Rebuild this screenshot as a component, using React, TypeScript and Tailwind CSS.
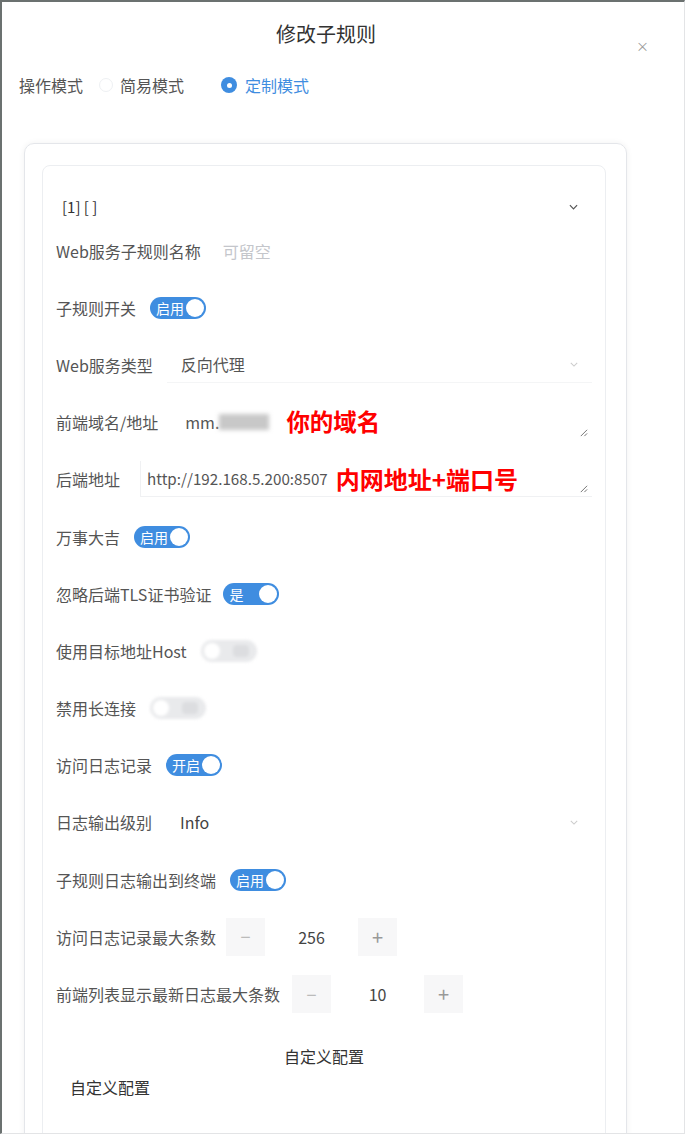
import React from "react";

const Toggle = ({ on, text }: { on: boolean; text?: string }) =>
  on ? (
    <div className="relative flex h-[22px] w-[56px] items-center rounded-full bg-[#3f8de0] pl-[6px]">
      <span className="text-[14px] leading-none text-white">{text}</span>
      <span className="absolute right-[2px] top-[2px] h-[18px] w-[18px] rounded-full bg-white" />
    </div>
  ) : (
    <div className="relative h-[22px] w-[56px] rounded-full bg-[#e9eaec] blur-[1.5px]">
      <span className="absolute left-[3px] top-[3px] h-[16px] w-[16px] rounded-full bg-white" />
      <span className="absolute right-[8px] top-[5px] h-[12px] w-[16px] rounded bg-[#dcdde0]" />
    </div>
  );

const Chevron = ({ className }: { className: string }) => (
  <svg viewBox="0 0 10 6" className={className} fill="none" stroke="currentColor" strokeWidth="1.3">
    <path d="M1 1l4 4 4-4" />
  </svg>
);

const Resize = () => (
  <svg viewBox="0 0 10 10" className="absolute bottom-[3px] right-[4px] h-[9px] w-[9px] text-[#666]" fill="none" stroke="currentColor" strokeWidth="1">
    <path d="M9 2L2 9M9 6L6 9" />
  </svg>
);

const Row = ({ label, children }: { label: string; children?: React.ReactNode }) => (
  <div className="flex h-[57.2px] items-center">
    <span className="whitespace-nowrap text-[16px] text-[#555]">{label}</span>
    {children}
  </div>
);

const Stepper = ({ value, gap }: { value: string; gap: string }) => (
  <div className={`flex items-center ${gap}`}>
    <div className="flex h-[38px] w-[39px] items-center justify-center bg-[#f7f7f8] text-[18px] text-[#bbb]">−</div>
    <div className="w-[93px] text-center text-[16px] text-[#444]">{value}</div>
    <div className="flex h-[38px] w-[39px] items-center justify-center bg-[#f7f7f8] text-[20px] text-[#999]">+</div>
  </div>
);

export default function App() {
  return (
    <div
      className="relative h-[1134px] w-[685px] overflow-hidden border-l-2 border-t-2 border-r border-b border-l-[#6b7170] border-t-[#6b7170] border-r-[#e3e4e6] border-b-[#e3e4e6] bg-white"
      style={{ fontFamily: '"Noto Sans CJK SC", "Noto Sans", sans-serif' }}
    >
      {/* header */}
      <div className="flex h-[64px] items-center justify-center pr-[34px] text-[20px] text-[#333]">修改子规则</div>
      <span className="absolute left-[634px] top-[37px] text-[13px] leading-none text-[#999]">×</span>

      {/* mode */}
      <div className="flex h-[38px] items-center pl-[17px] text-[16px] text-[#555]">
        <span>操作模式</span>
        <span className="ml-[16px] h-[14px] w-[14px] rounded-full border border-[#eef0f3]" />
        <span className="ml-[7px]">简易模式</span>
        <span className="ml-[37px] flex h-[16px] w-[16px] items-center justify-center rounded-full bg-[#3f8de0]">
          <span className="h-[5px] w-[5px] rounded-full bg-white" />
        </span>
        <span className="ml-[8px] text-[#3f8de0]">定制模式</span>
      </div>

      {/* outer card */}
      <div className="ml-[22px] mt-[39px] h-[1100px] w-[603px] rounded-[10px] border border-[#e4e6ea] pl-[17px] pt-[21px] shadow-[0_0_6px_rgba(0,0,0,0.06)]">
        <div className="h-[1100px] w-[564px] rounded-[8px] border border-[#eceef1] px-[13px] pt-[26px]">
          <div className="flex h-[30px] items-center justify-between pl-[6px] pr-[14px] text-[15px] text-[#333]">
            <span>[1] [ ]</span>
            <Chevron className="h-[6px] w-[9px] text-[#555]" />
          </div>

          <Row label="Web服务子规则名称">
            <span className="ml-[22px] text-[16px] text-[#c4c6cb]">可留空</span>
          </Row>
          <Row label="子规则开关">
            <div className="ml-[14px]"><Toggle on text="启用" /></div>
          </Row>
          <Row label="Web服务类型">
            <div className="ml-[14px] flex h-[36px] flex-1 items-center justify-between border-b border-[#f4f5f6] pl-[14px] pr-[14px]">
              <span className="text-[16px] text-[#555]">反向代理</span>
              <Chevron className="h-[5px] w-[8px] text-[#ccc]" />
            </div>
          </Row>
          <Row label="前端域名/地址">
            <div className="relative ml-[14px] flex h-[36px] flex-1 items-center pl-[13px]">
              <span className="text-[16px] text-[#555]">mm.</span>
              <span className="h-[16px] w-[50px] bg-[#c8c8c8] blur-[2px]" />
              <span className="ml-[17px] text-[23.5px] font-bold leading-none text-[#ff0000]">你的域名</span>
              <Resize />
            </div>
          </Row>
          <Row label="后端地址">
            <div className="relative ml-[20px] flex h-[36px] flex-1 items-center border-b border-l border-[#f0f1f3] pl-[6px]">
              <span className="text-[15.2px] text-[#555]">http://192.168.5.200:8507</span>
              <span className="ml-[8px] text-[24px] font-bold leading-none text-[#ff0000]">内网地址+端口号</span>
              <Resize />
            </div>
          </Row>
          <Row label="万事大吉">
            <div className="ml-[14px]"><Toggle on text="启用" /></div>
          </Row>
          <Row label="忽略后端TLS证书验证">
            <div className="ml-[12px]"><Toggle on text="是" /></div>
          </Row>
          <Row label="使用目标地址Host">
            <div className="ml-[14px]"><Toggle on={false} /></div>
          </Row>
          <Row label="禁用长连接">
            <div className="ml-[14px]"><Toggle on={false} /></div>
          </Row>
          <Row label="访问日志记录">
            <div className="ml-[14px]"><Toggle on text="开启" /></div>
          </Row>
          <Row label="日志输出级别">
            <div className="ml-[14px] flex h-[36px] flex-1 items-center justify-between pl-[14px] pr-[14px]">
              <span className="text-[16px] text-[#444]">Info</span>
              <Chevron className="h-[5px] w-[8px] text-[#ccc]" />
            </div>
          </Row>
          <Row label="子规则日志输出到终端">
            <div className="ml-[14px]"><Toggle on text="启用" /></div>
          </Row>
          <Row label="访问日志记录最大条数">
            <Stepper value="256" gap="ml-[10px]" />
          </Row>
          <Row label="前端列表显示最新日志最大条数">
            <Stepper value="10" gap="ml-[12px]" />
          </Row>

          <div className="mt-[18px] flex h-[30px] items-center justify-center text-[16px] text-[#333]">自定义配置</div>
          <div className="flex h-[32px] items-center pl-[14px] text-[16px] text-[#333]">自定义配置</div>
        </div>
      </div>
    </div>
  );
}
